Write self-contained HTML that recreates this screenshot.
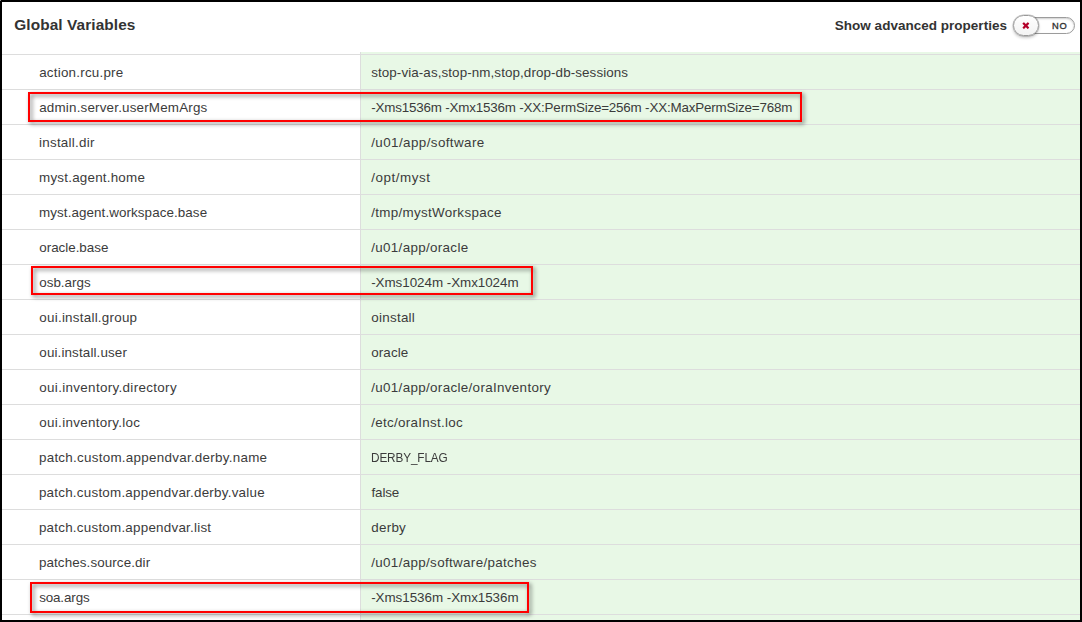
<!DOCTYPE html><html><head><meta charset="utf-8"><title>Global Variables</title><style>
html,body{margin:0;padding:0}
body{width:1082px;height:622px;position:relative;overflow:hidden;background:#fff;font-family:"Liberation Sans",sans-serif;color:#3b3b3b}
.frame{position:absolute;left:0;top:0;width:1082px;height:622px;box-sizing:border-box;border:2px solid #000;z-index:20;pointer-events:none}
.green{position:absolute;left:361px;top:52px;width:719px;height:568px;background:#e8f8e6}
.vline{position:absolute;left:360px;top:52px;width:1px;height:568px;background:#ddd}
.hl{position:absolute;left:2px;width:1078px;height:1px;background:#ddd}
.t{position:absolute;white-space:nowrap;font-size:13.4px;line-height:20px;height:20px}
.title{position:absolute;left:14.3px;top:15px;font-weight:bold;font-size:15.4px;line-height:20px;white-space:nowrap;letter-spacing:0.09px;color:#333}
.adv{position:absolute;left:834.8px;top:16.2px;font-weight:bold;font-size:13.5px;line-height:20px;white-space:nowrap;letter-spacing:0.015px;color:#333}
.track{position:absolute;left:1026px;top:17px;width:49px;height:17px;box-sizing:border-box;border:1px solid #9c9c9c;border-radius:9px;background:#fff;box-shadow:inset 0 1px 2px rgba(0,0,0,0.2)}
.no{position:absolute;left:1052.0px;top:19.0px;font-size:9.3px;font-weight:normal;-webkit-text-stroke:0.35px #333;line-height:14px;letter-spacing:0.9px;color:#333}
.knob{position:absolute;left:1013px;top:15px;width:26px;height:21px;box-sizing:border-box;border:1px solid #999;border-radius:10.5px;background:linear-gradient(#fff,#f3f3f3);box-shadow:0 0 0 0.4px rgba(0,0,0,0.25),0 2px 3px rgba(0,0,0,0.2)}
.knob svg{position:absolute;left:0;top:0}
.rb{position:absolute;box-sizing:border-box;border:2px solid #f00;filter:drop-shadow(2.5px 2.5px 2px rgba(0,0,0,0.55));z-index:10}
</style></head><body>
<div class="green"></div><div class="vline"></div>
<div class="hl" style="top:54px"></div>
<div class="hl" style="top:89px"></div>
<div class="hl" style="top:124px"></div>
<div class="hl" style="top:159px"></div>
<div class="hl" style="top:194px"></div>
<div class="hl" style="top:229px"></div>
<div class="hl" style="top:264px"></div>
<div class="hl" style="top:299px"></div>
<div class="hl" style="top:334px"></div>
<div class="hl" style="top:369px"></div>
<div class="hl" style="top:404px"></div>
<div class="hl" style="top:439px"></div>
<div class="hl" style="top:474px"></div>
<div class="hl" style="top:509px"></div>
<div class="hl" style="top:544px"></div>
<div class="hl" style="top:579px"></div>
<div class="hl" style="top:614px"></div>
<div class="title">Global Variables</div>
<div class="adv">Show advanced properties</div>
<div class="track"></div><div class="no">NO</div>
<div class="knob"><svg width="24" height="19" viewBox="0 0 24 19"><g transform="translate(11.84,9.6) rotate(45)" fill="#b3002a"><rect x="-3.85" y="-1.15" width="7.7" height="2.3" rx="0.5"/><rect x="-1.15" y="-3.85" width="2.3" height="7.7" rx="0.5"/></g></svg></div>
<div class="t" id="l0" style="left:39.21px;top:62.60px;letter-spacing:0.223px">action.rcu.pre</div>
<div class="t" id="v0" style="left:371.15px;top:62.60px;letter-spacing:0.096px">stop-via-as,stop-nm,stop,drop-db-sessions</div>
<div class="t" id="l1" style="left:39.21px;top:97.60px;letter-spacing:0.191px">admin.server.userMemArgs</div>
<div class="t" id="v1" style="left:371.19px;top:97.60px;letter-spacing:-0.184px">-Xms1536m -Xmx1536m -XX:PermSize=256m -XX:MaxPermSize=768m</div>
<div class="t" id="l2" style="left:38.98px;top:132.60px;letter-spacing:0.264px">install.dir</div>
<div class="t" id="v2" style="left:371.22px;top:132.60px;letter-spacing:0.412px">/u01/app/software</div>
<div class="t" id="l3" style="left:39.05px;top:167.60px;letter-spacing:0.220px">myst.agent.home</div>
<div class="t" id="v3" style="left:371.24px;top:167.60px;letter-spacing:0.565px">/opt/myst</div>
<div class="t" id="l4" style="left:39.05px;top:202.60px;letter-spacing:0.086px">myst.agent.workspace.base</div>
<div class="t" id="v4" style="left:371.22px;top:202.60px;letter-spacing:0.318px">/tmp/mystWorkspace</div>
<div class="t" id="l5" style="left:39.32px;top:237.60px;letter-spacing:-0.021px">oracle.base</div>
<div class="t" id="v5" style="left:371.22px;top:237.60px;letter-spacing:0.328px">/u01/app/oracle</div>
<div class="t" id="l6" style="left:39.32px;top:272.60px;letter-spacing:-0.011px">osb.args</div>
<div class="t" id="v6" style="left:371.19px;top:272.60px;letter-spacing:-0.038px">-Xms1024m -Xmx1024m</div>
<div class="t" id="l7" style="left:39.32px;top:307.60px;letter-spacing:0.247px">oui.install.group</div>
<div class="t" id="v7" style="left:371.31px;top:307.60px;letter-spacing:0.259px">oinstall</div>
<div class="t" id="l8" style="left:39.32px;top:342.60px;letter-spacing:0.133px">oui.install.user</div>
<div class="t" id="v8" style="left:371.31px;top:342.60px;letter-spacing:0.081px">oracle</div>
<div class="t" id="l9" style="left:39.32px;top:377.60px;letter-spacing:0.331px">oui.inventory.directory</div>
<div class="t" id="v9" style="left:371.22px;top:377.60px;letter-spacing:0.335px">/u01/app/oracle/oraInventory</div>
<div class="t" id="l10" style="left:39.32px;top:412.60px;letter-spacing:0.308px">oui.inventory.loc</div>
<div class="t" id="v10" style="left:371.22px;top:412.60px;letter-spacing:0.289px">/etc/oraInst.loc</div>
<div class="t" id="l11" style="left:38.94px;top:447.60px;letter-spacing:0.274px">patch.custom.appendvar.derby.name</div>
<div class="t" id="v11" style="left:371.28px;top:447.60px;letter-spacing:-0.150px;transform:scaleX(0.8797);transform-origin:0 50%">DERBY_FLAG</div>
<div class="t" id="l12" style="left:38.94px;top:482.60px;letter-spacing:0.236px">patch.custom.appendvar.derby.value</div>
<div class="t" id="v12" style="left:371.54px;top:482.60px;letter-spacing:-0.152px">false</div>
<div class="t" id="l13" style="left:38.94px;top:517.60px;letter-spacing:0.236px">patch.custom.appendvar.list</div>
<div class="t" id="v13" style="left:371.34px;top:517.60px;letter-spacing:0.238px">derby</div>
<div class="t" id="l14" style="left:38.94px;top:552.60px;letter-spacing:0.104px">patches.source.dir</div>
<div class="t" id="v14" style="left:371.22px;top:552.60px;letter-spacing:0.338px">/u01/app/software/patches</div>
<div class="t" id="l15" style="left:39.14px;top:587.60px;letter-spacing:-0.114px">soa.args</div>
<div class="t" id="v15" style="left:371.19px;top:587.60px;letter-spacing:-0.038px">-Xms1536m -Xmx1536m</div>
<div class="rb" style="left:28px;top:92px;width:774px;height:30px"></div>
<div class="rb" style="left:31px;top:266px;width:502px;height:29px"></div>
<div class="rb" style="left:30px;top:582px;width:499px;height:31px"></div>
<div class="frame"></div><div style="position:absolute;left:0;top:0;width:1px;height:1px;background:#8a8a8a;z-index:30"></div></body></html>
